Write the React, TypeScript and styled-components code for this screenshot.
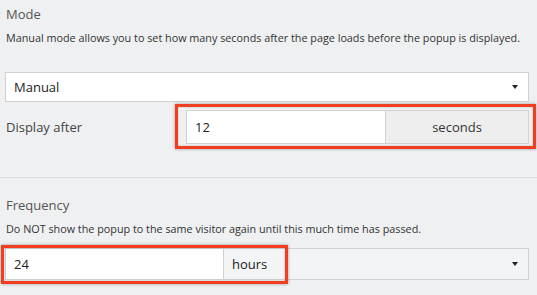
import React from 'react';
import styled, { createGlobalStyle } from 'styled-components';

const GlobalStyle = createGlobalStyle`
  html, body {
    margin: 0;
    padding: 0;
    background: #eef0f1;
  }
  body {
    font-family: "Open Sans", "DejaVu Sans", sans-serif;
    color: #444;
  }
`;

const Page = styled.div`
  width: 537px;
  height: 295px;
  overflow: hidden;
  background: #eef0f1;
`;

const Section = styled.div<{ $top: number }>`
  padding: ${p => p.$top}px 8px 0 5px;
`;

const Title = styled.div`
  font-size: 13px;
  line-height: 18px;
  color: #555;
  padding-left: 1px;
`;

const Help = styled.div`
  font-size: 10.8px;
  line-height: 16px;
  color: #333;
  margin-top: 7px;
  padding-left: 1px;
  white-space: nowrap;
`;

const SelectBox = styled.div`
  display: flex;
  align-items: center;
  justify-content: space-between;
  height: 30px;
  margin-top: 26px;
  box-sizing: border-box;
  border: 1px solid #cfd1d3;
  background: #fff;
  font-size: 13px;
  color: #222;
  padding: 0 10px 0 8px;
`;

const Caret = styled.span`
  width: 0;
  height: 0;
  border-left: 3.5px solid transparent;
  border-right: 3.5px solid transparent;
  border-top: 4px solid #222;
`;

const FieldRow = styled.div`
  display: flex;
  align-items: center;
  margin-top: 8px;
`;

const Label = styled.div`
  width: 180px;
  font-size: 13px;
  color: #444;
  padding-left: 1px;
`;

const Group = styled.div`
  position: relative;
  flex: 1;
  display: flex;
  height: 34px;
`;

const Highlight = styled.div<{ $l: number; $t: number; $w: number; $h: number }>`
  position: absolute;
  left: ${p => p.$l}px;
  top: ${p => p.$t}px;
  width: ${p => p.$w}px;
  height: ${p => p.$h}px;
  box-sizing: border-box;
  border: 3px solid #f33d21;
  box-shadow: 0 0 3px rgba(0, 0, 0, 0.35), inset 0 0 2px rgba(0, 0, 0, 0.25);
  pointer-events: none;
`;

const TextInput = styled.div<{ $w: number }>`
  width: ${p => p.$w}px;
  box-sizing: border-box;
  border: 1px solid #cfd1d3;
  background: #fff;
  display: flex;
  align-items: center;
  padding-left: 8px;
  font-size: 13px;
  color: #222;
`;

const Addon = styled.div`
  flex: 1;
  box-sizing: border-box;
  border: 1px solid #cfd1d3;
  border-left: none;
  background: #eeeeee;
  display: flex;
  align-items: center;
  justify-content: center;
  font-size: 13px;
  color: #333;
`;

const Divider = styled.div`
  height: 1px;
  background: #dcdde0;
  margin-top: 33px;
`;

const SplitRow = styled.div`
  position: relative;
  display: flex;
  height: 32px;
  margin-top: 11px;
`;

const SplitSelect = styled(SelectBox)`
  flex: 1;
  height: 32px;
  margin-top: 0;
  border-left: none;
  background: #f3f4f5;
  color: #222;
`;

export default function App() {
  return (
    <Page>
      <GlobalStyle />
      <Section $top={5}>
        <Title>Mode</Title>
        <Help>Manual mode allows you to set how many seconds after the page loads before the popup is displayed.</Help>
        <SelectBox>
          <span>Manual</span>
          <Caret />
        </SelectBox>
        <FieldRow>
          <Label>Display after</Label>
          <Group>
            <TextInput $w={200}>12</TextInput>
            <Addon>seconds</Addon>
            <Highlight $l={-11} $t={-6} $w={361} $h={45} />
          </Group>
        </FieldRow>
      </Section>
      <Divider />
      <Section $top={18}>
        <Title>Frequency</Title>
        <Help>Do NOT show the popup to the same visitor again until this much time has passed.</Help>
        <SplitRow>
          <TextInput $w={219}>24</TextInput>
          <SplitSelect>
            <span>hours</span>
            <Caret />
          </SplitSelect>
          <Highlight $l={-4} $t={-3} $w={287} $h={39} />
        </SplitRow>
      </Section>
    </Page>
  );
}
